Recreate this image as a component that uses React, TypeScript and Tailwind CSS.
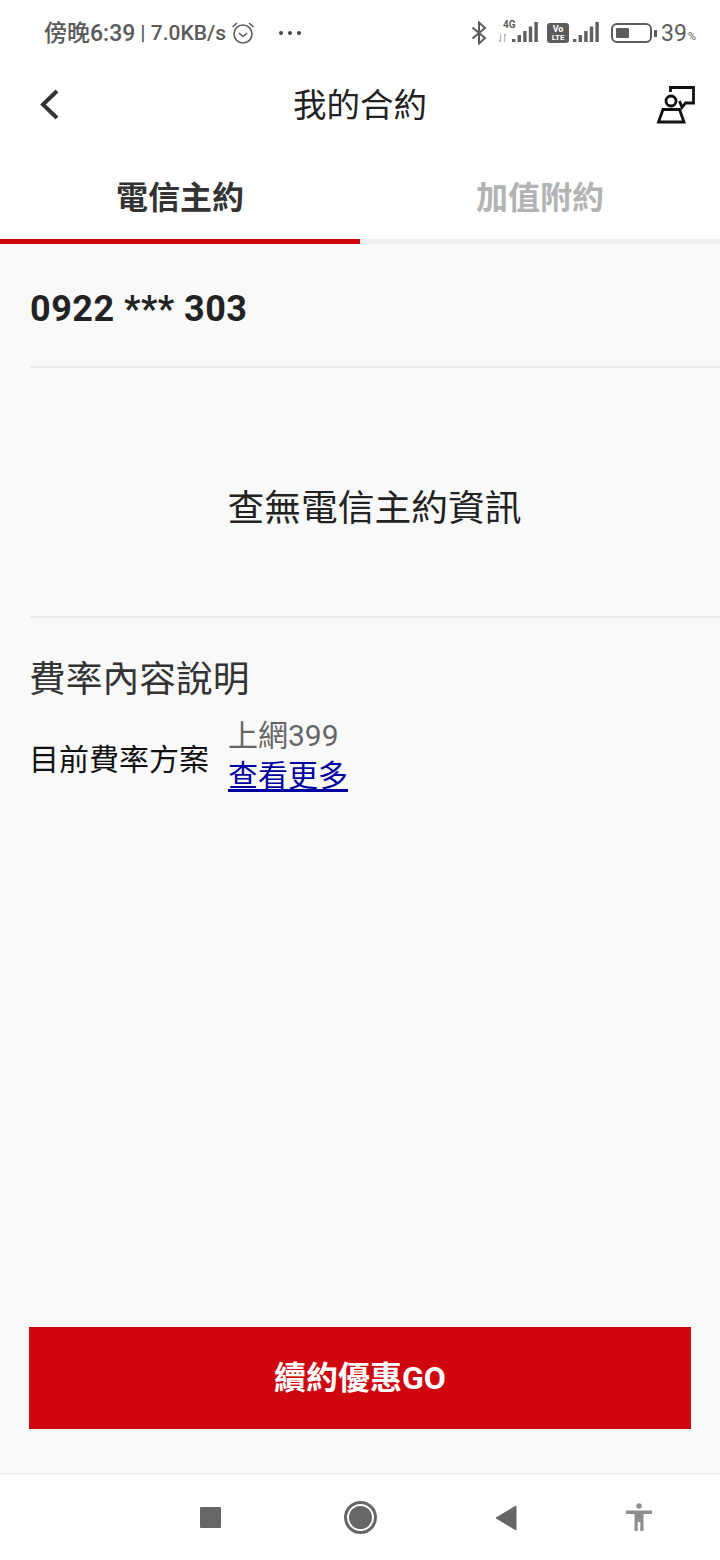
import React from "react";

const cjk = "font-['Roboto','Noto_Sans_CJK_TC',sans-serif]";

function Signal({ x = 0 }: { x?: number }) {
  const bars = [[0, 3], [5.6, 7], [11.2, 11], [16.8, 15.5], [22.4, 20]];
  return (
    <g transform={`translate(${x},0)`} fill="#5f5f5f">
      {bars.map(([bx, h]) => (
        <rect key={bx} x={bx} y={21 - h} width={3.4} height={h} />
      ))}
    </g>
  );
}

function StatusBar() {
  return (
    <div className="h-[66px] flex items-center bg-white text-[#5c5c5c] relative">
      <div className="flex items-center pl-[44px] h-full">
        <span className={`${cjk} text-[23px] font-medium leading-none text-[#5a5a5a] whitespace-nowrap`}>傍晚6:39</span>
        <span className={`${cjk} text-[21px] font-medium leading-none text-[#5a5a5a] whitespace-nowrap ml-[5px]`}>| 7.0KB/s</span>
        <svg className="ml-[5px]" width="24" height="24" viewBox="0 0 24 24" fill="none" stroke="#5c5c5c" strokeWidth="1.6">
          <circle cx="12" cy="13" r="9" />
          <path d="M8 12l4 3.500 4-3.500" />
          <path d="M1.500 6 6 2M22.500 6 18 2" />
        </svg>
        <div className="flex gap-[5px] ml-[24px]">
          <span className="w-[4px] h-[4px] rounded-full bg-[#444]" />
          <span className="w-[4px] h-[4px] rounded-full bg-[#444]" />
          <span className="w-[4px] h-[4px] rounded-full bg-[#444]" />
        </div>
      </div>
      <div className="ml-auto flex items-center h-full pr-[24px]">
        <svg width="16" height="24" viewBox="0 0 16 24" fill="none" stroke="#5c5c5c" strokeWidth="2">
          <path d="M1.500 6.500 14 17 8 22.500V1.500L14 7 1.500 17.500" />
        </svg>
        <div className="relative w-[43px] h-[24px] ml-[10px]">
          <span className={`${cjk} absolute left-[6px] -top-[2px] text-[10px] font-bold leading-[12px] text-[#5c5c5c]`}>4G</span>
          <svg className="absolute left-0 top-0" width="43" height="24" viewBox="0 0 43 24">
            <path d="M3.500 13v8M2 19.500 3.500 21M7.500 13v8M7.500 13 9 14.500" stroke="#b5b5b5" strokeWidth="1.2" fill="none" />
            <Signal x={15} />
          </svg>
        </div>
        <div className="w-[22px] h-[20px] rounded-[3px] bg-[#5c5c5c] ml-[7px] flex flex-col items-center justify-center">
          <span className={`${cjk} text-[9px] font-bold leading-[8px] text-white`}>Vo</span>
          <span className={`${cjk} text-[8px] font-bold leading-[9px] text-white`}>LTE</span>
        </div>
        <svg className="ml-[3px]" width="27" height="24" viewBox="0 0 27 24">
          <Signal x={1} />
        </svg>
        <div className="ml-[12px] flex items-center">
          <div className="w-[41px] h-[20px] rounded-[6px] border-2 border-[#5c5c5c] p-[3px]">
            <div className="w-[13px] h-full bg-[#5c5c5c] rounded-[1px]" />
          </div>
          <div className="w-[3px] h-[7px] bg-[#5c5c5c] ml-[2px]" />
        </div>
        <span className={`${cjk} text-[23px] leading-none text-[#5c5c5c] ml-[4px]`}>39</span>
        <span className={`${cjk} text-[11px] leading-none text-[#5c5c5c] mt-[7px] ml-[1px]`}>%</span>
      </div>
    </div>
  );
}

function Header() {
  return (
    <div className="h-[84px] grid grid-cols-[1fr_auto_1fr] items-center bg-white px-[24px]">
      <svg width="24" height="34" viewBox="0 0 24 34" fill="none" stroke="#333" strokeWidth="4" className="-mt-[9px] ml-[13px]">
        <path d="M20 4 6 17.500 20 31" />
      </svg>
      <span className={`${cjk} text-[33.5px] leading-none text-[#222] -mt-[4px] whitespace-nowrap`}>我的合約</span>
      <svg width="40" height="40" viewBox="0 0 40 40" fill="none" stroke="#111" strokeWidth="2.8" className="-mt-[6px] justify-self-end">
        <path d="M14.500 7V2.500H37.500V18H29.500L26 22.500 23.500 16" />
        <circle cx="15" cy="16" r="5" />
        <path d="M7 24.500H23.500L28 37H2.500z" />
      </svg>
    </div>
  );
}

function Tabs() {
  return (
    <div className="h-[94px] flex bg-white">
      <div className="w-1/2 flex items-center justify-center border-b-[5px] border-[#d0060f]">
        <span className={`${cjk} text-[32px] font-bold leading-none text-[#333] mt-[7px]`}>電信主約</span>
      </div>
      <div className="w-1/2 flex items-center justify-center border-b-[5px] border-[#f0f0f0]">
        <span className={`${cjk} text-[32px] font-bold leading-none text-[#b3b3b3] mt-[7px]`}>加值附約</span>
      </div>
    </div>
  );
}

export default function App() {
  return (
    <div className={`w-[720px] h-[1560px] flex flex-col bg-[#f9f9f9] overflow-hidden ${cjk}`}>
      <StatusBar />
      <Header />
      <Tabs />
      <main className="flex-1 flex flex-col pl-[30px]">
        <div className="h-[124px] flex items-center border-b-2 border-[#ececec]">
          <span className="text-[36px] tracking-[0.5px] font-bold leading-none text-[#222] mt-[7px]">0922 *** 303</span>
        </div>
        <div className="h-[250px] flex items-center justify-center border-b-2 border-[#ececec]">
          <span className="text-[36.75px] leading-none text-[#222] -ml-[1px] mt-[34px]">查無電信主約資訊</span>
        </div>
        <div className="pt-[44px]">
          <div className="text-[36.75px] leading-none text-[#333] -ml-[1px]">費率內容說明</div>
          <div className="flex items-center mt-[17px] -ml-[1px]">
            <span className="w-[199px] text-[30px] leading-none text-[#111] whitespace-nowrap mt-[8px]">目前費率方案</span>
            <div className="flex flex-col items-start">
              <span className="text-[30px] leading-[40px] text-[#666] whitespace-nowrap">上網399</span>
              <a className="text-[30px] leading-[40px] text-[#0000a0] underline underline-offset-[3px] whitespace-nowrap">查看更多</a>
            </div>
          </div>
        </div>
      </main>
      <div className="px-[29px] pb-[44px]">
        <button className="w-full h-[102px] bg-[#d0060f] flex items-center justify-center text-white text-[32px] font-bold leading-none">
          續約優惠GO
        </button>
      </div>
      <nav className="h-[87px] bg-white border-t-2 border-[#efefef] flex items-center relative">
        <div className="w-[21px] h-[21px] bg-[#666] rounded-[1px] ml-[200px]" />
        <div className="w-[33px] h-[33px] rounded-full border-[3px] border-[#666] flex items-center justify-center ml-[123px]">
          <div className="w-[23px] h-[23px] rounded-full bg-[#666]" />
        </div>
        <svg className="ml-[118px]" width="22" height="26" viewBox="0 0 22 26">
          <path d="M21 1v24L1 13z" fill="#666" stroke="#666" strokeLinejoin="round" />
        </svg>
        <svg className="ml-[109px] -mt-[2px]" width="26" height="28" viewBox="0 0 26 28" fill="#8e8e8e">
          <circle cx="13" cy="3" r="2.700" />
          <path d="M0 7.500h26v3.500h-8.500v17h-3.200v-9h-2.600v9H8.500v-17H0z" />
        </svg>
      </nav>
    </div>
  );
}
